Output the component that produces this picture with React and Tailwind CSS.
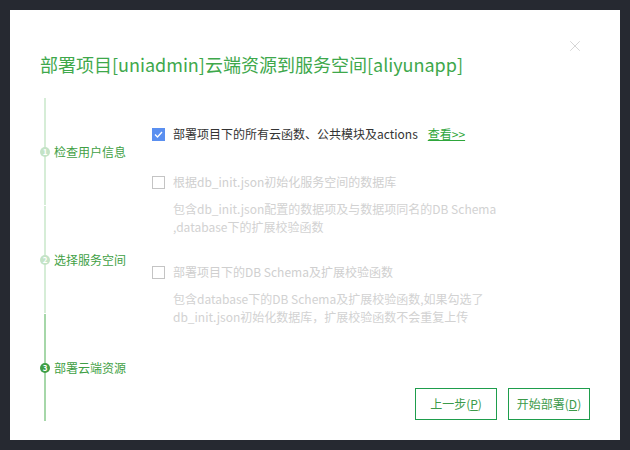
import { X } from "lucide-react";

const font = { fontFamily: '"Noto Sans CJK SC", "Noto Sans", sans-serif' };

function Step({ n, label, active, last }) {
  return (
    <div
      className={
        "h-[107px] flex items-center border-l-2 " +
        (active ? "border-[#a6d7a9]" : "border-[#d6edd7]") +
        (last ? "" : " mb-[1px]")
      }
    >
      <span
        className={
          "-ml-[6px] w-[10px] h-[10px] rounded-full flex items-center justify-center text-[8px] leading-none font-bold text-white " +
          (active ? "bg-[#3f9e45]" : "bg-[#c4e3c6]")
        }
      >
        {n}
      </span>
      <span className="ml-[4px] text-[12px] text-[#3f9f45]">{label}</span>
    </div>
  );
}

function Check({ checked }) {
  return checked ? (
    <span className="w-[13px] h-[13px] bg-[#5a8ff0] flex items-center justify-center shrink-0">
      <svg width="9" height="7" viewBox="0 0 9 7">
        <path d="M1 3.5 L3.5 6 L8 1" stroke="white" strokeWidth="1.3" fill="none" />
      </svg>
    </span>
  ) : (
    <span className="w-[13px] h-[13px] border border-[#c4c4c4] bg-white shrink-0" />
  );
}

export default function App() {
  return (
    <div className="w-[630px] h-[450px] bg-[#262931] pt-[10px] pl-[10px]" style={font}>
      <div className="w-[610px] h-[430px] bg-white flex flex-col">
        {/* 标题 */}
        <div className="flex items-start justify-between pl-[30px] pr-[36px] pt-[26px]">
          <h1 className="mt-[15px] text-[18px] leading-[26px] text-[#3ea84b]">
            部署项目[uniadmin]云端资源到服务空间[aliyunapp]
          </h1>
          <X size={18} strokeWidth={1} className="text-[#c8c8c8] mt-[1px]" />
        </div>

        <div className="flex mt-[21px]">
          {/* 步骤 */}
          <div className="w-[142px] pl-[34px]">
            <Step n="1" label="检查用户信息" />
            <Step n="2" label="选择服务空间" />
            <Step n="3" label="部署云端资源" active last />
          </div>

          {/* 选项 */}
          <div className="flex-1 pt-[26px] text-[12px]">
            <div className="h-5 flex items-center gap-[8px]">
              <Check checked />
              <span className="text-[#333]">部署项目下的所有云函数、公共模块及actions</span>
              <span className="ml-[2px] text-[#2ea63b] underline">查看&gt;&gt;</span>
            </div>

            <div className="h-5 mt-[28px] flex items-center gap-[8px] text-[#cfcfcf]">
              <Check />
              <span>根据db_init.json初始化服务空间的数据库</span>
            </div>
            <div className="mt-[8px] pl-[21px] leading-[18px] text-[#d2d2d2]">
              <div>包含db_init.json配置的数据项及与数据项同名的DB Schema</div>
              <div>,database下的扩展校验函数</div>
            </div>

            <div className="h-5 mt-[26px] flex items-center gap-[8px] text-[#cfcfcf]">
              <Check />
              <span>部署项目下的DB Schema及扩展校验函数</span>
            </div>
            <div className="mt-[8px] pl-[21px] leading-[18px] text-[#d2d2d2]">
              <div>包含database下的DB Schema及扩展校验函数,如果勾选了</div>
              <div>db_init.json初始化数据库，扩展校验函数不会重复上传</div>
            </div>

            <div className="flex justify-end gap-[11px] pr-[30px] mt-[62px]">
              <button className="w-[82px] h-[32px] border border-[#1e9d4c] text-[12px] text-[#3c9a4a]">
                上一步(<span className="underline">P</span>)
              </button>
              <button className="w-[82px] h-[32px] border border-[#1e9d4c] text-[12px] text-[#3c9a4a]">
                开始部署(<span className="underline">D</span>)
              </button>
            </div>
          </div>
        </div>
      </div>
    </div>
  );
}
